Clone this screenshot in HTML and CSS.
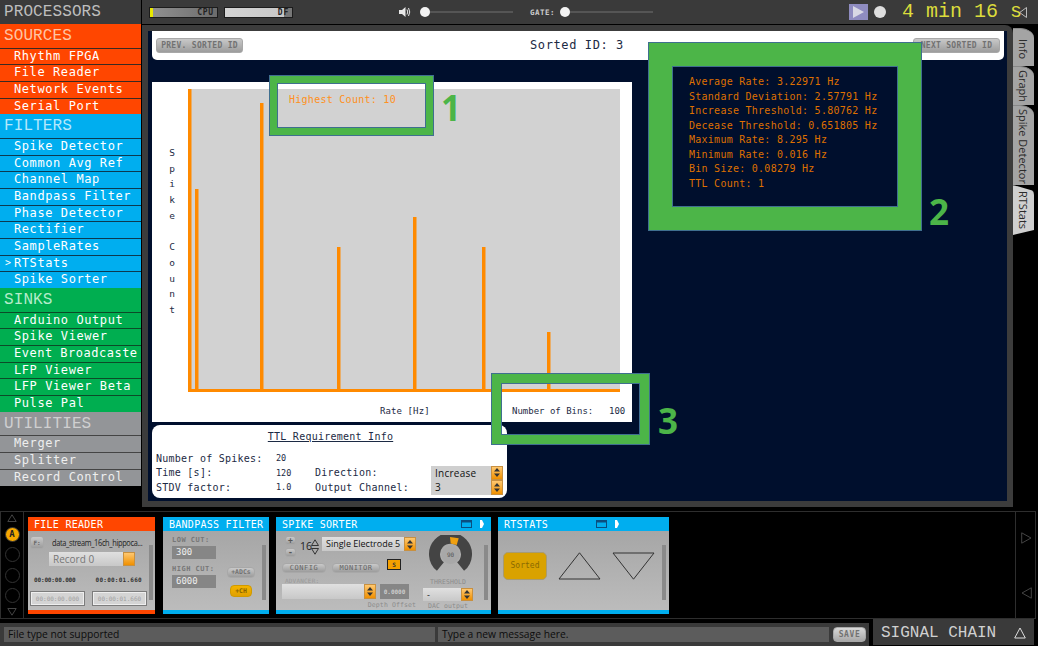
FILE: index.html
```html
<!DOCTYPE html>
<html lang="en">
<head>
<meta charset="utf-8">
<title>Open Ephys RTStats</title>
<link rel="stylesheet" href="styles.css">
</head>
<body>
<div class="app">
  <aside class="sidebar">
    <div class="side-title">PROCESSORS</div>
    <section class="group sources">
      <h2>SOURCES</h2>
      <div class="item">Rhythm FPGA</div><div class="item">File Reader</div><div class="item">Network Events</div><div class="item">Serial Port</div>
    </section>
    <section class="group filters">
      <h2>FILTERS</h2>
      <div class="item">Spike Detector</div><div class="item">Common Avg Ref</div><div class="item">Channel Map</div><div class="item">Bandpass Filter</div><div class="item">Phase Detector</div><div class="item">Rectifier</div><div class="item">SampleRates</div><div class="item selected">RTStats</div><div class="item">Spike Sorter</div>
    </section>
    <section class="group sinks">
      <h2>SINKS</h2>
      <div class="item">Arduino Output</div><div class="item">Spike Viewer</div><div class="item event">Event Broadcaste</div><div class="item">LFP Viewer</div><div class="item">LFP Viewer Beta</div><div class="item">Pulse Pal</div>
    </section>
    <section class="group utilities">
      <h2>UTILITIES</h2>
      <div class="item">Merger</div><div class="item">Splitter</div><div class="item">Record Control</div>
    </section>
  </aside>

  <header class="topbar">
    <div class="meter cpu"><span>CPU</span></div>
    <div class="meter df"><span>DF</span></div>
    <svg class="speaker" width="12" height="12" viewBox="0 0 12 12"><path d="M0 4h3l3.500-3v10L3 8H0z" fill="#e8e8e8"/><path d="M8 3.500q1.500 2.500 0 5M9.500 2q2.500 4 0 8" fill="none" stroke="#e8e8e8" stroke-width="1"/></svg>
    <div class="slider first"><i class="knob"></i><i class="track"></i></div>
    <span class="gate">GATE:</span>
    <div class="slider"><i class="knob"></i><i class="track"></i></div>
    <div class="play"><svg width="11" height="12" viewBox="0 0 11 12"><path d="M0 0l11 6-11 6z" fill="#d8d8e4"/></svg></div>
    <i class="rec"></i>
    <span class="timer">4 min 16 s</span>
    <svg class="collapse" width="8" height="11" viewBox="0 0 8 11"><path d="M7.500 .5v10L.7 5.500z" fill="none" stroke="#bbb"/></svg>
  </header>

  <main class="workspace">
    <div class="frame">
      <div class="navy">
        <div class="id-panel">
          <button class="btn wide">PREV. SORTED ID</button>
          <span class="sorted-id">Sorted ID: 3</span>
          <button class="btn wide">NEXT SORTED ID</button>
        </div>
        <div class="chart">
          <div class="chart-main">
            <div class="ylabel"><span>S</span><span>p</span><span>i</span><span>k</span><span>e</span><span>&nbsp;</span><span>C</span><span>o</span><span>u</span><span>n</span><span>t</span></div>
            <svg class="plot" width="434" height="303" viewBox="0 0 434 303">
              <rect x="2" width="432" height="301" fill="#d2d2d2"/>
              <g fill="#ff8a00">
                <rect x="2" y="0" width="3.500" height="303"/>
                <rect x="2" y="300" width="432" height="3"/>
                <rect x="9" y="100" width="3.500" height="200"/>
                <rect x="74" y="14" width="3.500" height="286"/>
                <rect x="151" y="158" width="3.500" height="142"/>
                <rect x="227" y="128" width="3.500" height="172"/>
                <rect x="296" y="158" width="3.500" height="142"/>
                <rect x="361" y="243" width="3.500" height="57"/>
              </g>
            </svg>
          </div>
          <div class="chart-foot">
            <span class="rate">Rate [Hz]</span>
            <span class="bins">Number of Bins:</span>
            <span class="bins-val">100</span>
          </div>
        </div>
        <div class="ttl">
          <div class="ttl-title">TTL Requirement Info</div>
          <div class="ttl-grid">
            <span>Number of Spikes:</span><span class="val">20</span><span></span><span></span>
            <span>Time [s]:</span><span class="val">120</span><span>Direction:</span><div class="combo ttl-combo"><em>Increase</em><b class="spin"><svg width="6" height="9" viewBox="0 0 6 9"><path d="M3 0l3 3.500H0zM3 9l3-3.500H0z" fill="#333"/></svg></b></div>
            <span>STDV factor:</span><span class="val">1.0</span><span>Output Channel:</span><div class="combo ttl-combo"><em>3</em><b class="spin"><svg width="6" height="9" viewBox="0 0 6 9"><path d="M3 0l3 3.500H0zM3 9l3-3.500H0z" fill="#333"/></svg></b></div>
          </div>
        </div>
      </div>
    </div>
    <nav class="tabs">
      <div class="tab t-info">Info</div>
      <div class="tab t-graph">Graph</div>
      <div class="tab t-spike">Spike Detector</div>
      <div class="tab t-rt">RTStats</div>
    </nav>
  </main>

  <section class="chain">
    <div class="chain-left">
      <svg width="10" height="8" viewBox="0 0 10 8"><path d="M5 .8L9.200 7.500H.8z" fill="none" stroke="#444"/></svg>
      <i class="slot active">A</i><i class="slot"></i><i class="slot"></i><i class="slot"></i>
      <svg width="10" height="8" viewBox="0 0 10 8"><path d="M5 7.200L9.200 .5H.8z" fill="none" stroke="#444"/></svg>
    </div>
    <div class="chain-view">
      <article class="card c-orange w-file">
        <div class="card-head">FILE READER</div>
        <div class="card-body">
          <div class="file-col">
            <div class="file-top"><button class="btn f-btn">F:</button><span class="filename">data_stream_16ch_hippoca...</span></div>
            <div class="combo rec-combo"><em>Record 0</em><b class="spin"></b></div>
            <div class="times"><span>00:00:00.000</span><span>00:00:01.660</span></div>
            <div class="time-boxes"><span>00:00:00.000</span><span>00:00:01.660</span></div>
          </div>
          <i class="scroll"></i>
        </div>
      </article>

      <article class="card c-blue w-band">
        <div class="card-head">BANDPASS FILTER</div>
        <div class="card-body">
          <div class="band-col">
            <label>LOW CUT:</label><div class="num">300</div>
            <label class="gap-label">HIGH CUT:</label><div class="num">6000</div>
          </div>
          <div class="band-btns"><button class="btn adc">+ADCs</button><button class="btn ch">+CH</button></div>
          <i class="scroll"></i>
        </div>
      </article>

      <article class="card c-blue w-sorter">
        <div class="card-head">SPIKE SORTER
          <span class="head-icons"><svg width="11" height="8" viewBox="0 0 11 8"><rect x=".5" y=".5" width="10" height="7" fill="none" stroke="#0a4f80"/><rect x=".5" y=".5" width="10" height="2" fill="#0a4f80"/></svg><svg width="4" height="8" viewBox="0 0 4 8"><path d="M0 0h2l2 4-2 4H0z" fill="#fff"/></svg></span>
        </div>
        <div class="card-body">
          <div class="sorter-left">
            <div class="s-row1">
              <div class="pm"><button class="btn">+</button><button class="btn">-</button></div>
              <span class="chan">16</span>
              <svg class="updown" width="8" height="16" viewBox="0 0 8 16"><path d="M4 .8L7.500 6.500H.5zM4 15.200L7.500 9.500H.5z" fill="none" stroke="#333"/></svg>
              <div class="combo el-combo"><em>Single Electrode 5</em><b class="spin"><svg width="6" height="9" viewBox="0 0 6 9"><path d="M3 0l3 3.500H0zM3 9l3-3.500H0z" fill="#333"/></svg></b></div>
            </div>
            <div class="s-row2">
              <button class="btn cfg">CONFIG</button><button class="btn mon">MONITOR</button><span class="s-box">S</span>
            </div>
            <div class="adv">ADVANCER:</div>
            <div class="s-row4">
              <div class="combo adv-combo"><em></em><b class="spin"><svg width="6" height="9" viewBox="0 0 6 9"><path d="M3 0l3 3.500H0zM3 9l3-3.500H0z" fill="#333"/></svg></b></div>
              <span class="depth">0.0000</span>
            </div>
            <div class="caption right">Depth Offset</div>
          </div>
          <div class="sorter-right">
            <div class="knob-wrap">
              <svg width="43" height="37" viewBox="0 0 43 37">
                <path d="M11.400 31.600A16 16 0 1 1 31.600 31.600" fill="none" stroke="#444" stroke-width="11"/>
                <circle cx="21.500" cy="20" r="9" fill="#a8a8a8"/>
                <path d="M21 2L29.700 3.300 27.700 10 21.700 8.600z" fill="#f0a010"/>
              </svg>
              <span class="knob-val">90</span>
            </div>
            <div class="caption center">THRESHOLD</div>
            <div class="combo dac-combo"><em>-</em><b class="spin"><svg width="6" height="9" viewBox="0 0 6 9"><path d="M3 0l3 3.500H0zM3 9l3-3.500H0z" fill="#333"/></svg></b></div>
            <div class="caption center">DAC output</div>
          </div>
          <i class="scroll"></i>
        </div>
      </article>

      <article class="card c-blue w-rt">
        <div class="card-head">RTSTATS
          <span class="head-icons"><svg width="11" height="8" viewBox="0 0 11 8"><rect x=".5" y=".5" width="10" height="7" fill="none" stroke="#0a4f80"/><rect x=".5" y=".5" width="10" height="2" fill="#0a4f80"/></svg><svg width="4" height="8" viewBox="0 0 4 8"><path d="M0 0h2l2 4-2 4H0z" fill="#fff"/></svg></span>
        </div>
        <div class="card-body">
          <button class="btn sorted">Sorted</button>
          <svg class="tri" width="43" height="28" viewBox="0 0 43 28"><path d="M21.500 .8L42 27H1z" fill="none" stroke="#333"/></svg>
          <svg class="tri" width="43" height="28" viewBox="0 0 43 28"><path d="M21.500 27.200L42 1H1z" fill="none" stroke="#333"/></svg>
          <i class="scroll"></i>
        </div>
      </article>
    </div>
    <div class="chain-right">
      <svg width="11" height="12" viewBox="0 0 11 12"><path d="M.7 .8L10 6 .7 11.200z" fill="none" stroke="#444"/></svg>
      <svg width="11" height="12" viewBox="0 0 11 12"><path d="M10.300 .8L1 6l9.300 5.200z" fill="none" stroke="#444"/></svg>
    </div>
  </section>

  <footer class="footer">
    <div class="status">
      <div class="field f-status">File type not supported</div>
      <div class="field f-msg">Type a new message here.</div>
      <button class="btn save">SAVE</button>
    </div>
    <div class="signal"><span>SIGNAL CHAIN</span><svg width="12" height="12" viewBox="0 0 12 12"><path d="M6 1l5.300 10H.7z" fill="none" stroke="#ddd"/></svg></div>
  </footer>

  <div class="callout co1"><span class="co-text">Highest Count: 10</span><b class="co-num">1</b></div>
  <div class="callout co2">
    <ul class="stats">
      <li>Average Rate: 3.22971 Hz</li>
      <li>Standard Deviation: 2.57791 Hz</li>
      <li>Increase Threshold: 5.80762 Hz</li>
      <li>Decease Threshold: 0.651805 Hz</li>
      <li>Maximum Rate: 8.295 Hz</li>
      <li>Minimum Rate: 0.016 Hz</li>
      <li>Bin Size: 0.08279 Hz</li>
      <li>TTL Count: 1</li>
    </ul>
    <b class="co-num">2</b>
  </div>
  <div class="callout co3"><b class="co-num">3</b></div>
</div>
</body>
</html>
```

FILE: styles.css
```css
* { box-sizing: border-box; }
html, body { margin: 0; height: 100%; }
body { background: #000; overflow: hidden; font-family: "DejaVu Sans Mono", monospace; }
i, em, b { font-style: normal; }
button { font-family: inherit; padding: 0; margin: 0; }

.app {
  position: relative;
  width: 1038px;
  height: 646px;
  display: grid;
  grid-template-columns: 142px 1fr;
  grid-template-rows: 25px 486px 108px 27px;
}

/* Sidebar */
.sidebar { grid-column: 1; grid-row: 1 / 3; }
.side-title {
  height: 24px;
  background: #3a3a3a;
  color: #bdbdbd;
  font: 16px/25px "Liberation Mono", monospace;
  letter-spacing: .1px;
  padding-left: 4px;
  width: 141px;
}
.group { width: 141px; color: #fff; }
.group h2 {
  margin: 0;
  height: 23.6px;
  font: 400 16px/25px "Liberation Mono", monospace;
  letter-spacing: .1px;
  padding-left: 4px;
}
.item {
  height: 16.7px;
  border-top: 1.5px solid #3a2a22;
  font-size: 12px;
  line-height: 14px;
  letter-spacing: .58px;
  padding-left: 14px;
  white-space: nowrap;
}
.event { letter-spacing: .5px; }
.sources { background: #ff4600; }
.sources h2 { color: #ffc4a4; }
.filters { background: #00aeef; }
.filters h2 { color: #b4e8fc; }
.filters .item { border-top-color: #0c3a50; }
.sinks { background: #00ae50; }
.sinks h2 { color: #b4ecca; }
.sinks .item { border-top-color: #0c4a28; }
.utilities { background: #939598; }
.utilities h2 { color: #cfcfd0; }
.utilities .item { border-top-color: #444; color: #eee; }
.selected { position: relative; }
.selected::before { content: ">"; position: absolute; left: 5px; top: -1px; font-size: 10px; line-height: 16px; }

/* Top bar */
.topbar {
  grid-column: 2;
  grid-row: 1;
  height: 24px;
  background: #3a3a3a;
  display: flex;
  align-items: center;
  padding-left: 7px;
  color: #ddd;
}
.meter {
  width: 69px;
  height: 11px;
  border: 1px solid #1c1c1c;
  display: flex;
  justify-content: flex-end;
  align-items: center;
  padding-right: 3px;
  font-size: 8px;
  font-weight: 700;
  letter-spacing: .8px;
  color: #222;
}
.cpu { background: linear-gradient(90deg, #e8e800 0 3px, #909090 3px, #6c6c6c); }
.df { margin-left: 6px; background: linear-gradient(90deg, #d4d4d4 0, #c8c8c8 88%, #777 88%); }
.speaker { margin-left: 106px; }
.slider { width: 93px; height: 10px; display: flex; align-items: center; }
.slider.first { margin-left: 9px; }
.knob { width: 10px; height: 10px; border-radius: 50%; background: #f2f2f2; flex: none; }
.track { flex: 1; height: 2px; background: #555; }
.gate { margin-left: 17px; width: 30px; font-size: 7.500px; font-weight: 700; letter-spacing: .5px; color: #ccc; }
.play {
  margin-left: 196px;
  width: 19px;
  height: 16px;
  background: #8f8cc0;
  display: flex;
  align-items: center;
  justify-content: center;
}
.rec { margin-left: 6px; width: 12px; height: 12px; border-radius: 50%; background: #dedede; }
.timer {
  margin-left: 16px;
  width: 120px;
  color: #dcdc3c;
  font: 20px/24px "Liberation Mono", monospace;
  white-space: nowrap;
}
.collapse { margin-left: -3px; }

/* Main */
.workspace { grid-column: 2; grid-row: 2; display: flex; align-items: flex-start; }
.frame {
  width: 871px;
  height: 482px;
  background: #3c3c3c;
  padding: 6px;
  border-radius: 0 8px 0 0;
}
.navy { height: 470px; background: #000f2d; padding-left: 4px; }
.id-panel {
  width: 852px;
  height: 29px;
  background: #fff;
  border-radius: 0 0 5px 5px;
  display: flex;
  align-items: flex-start;
  justify-content: space-between;
  padding: 7px 4px 0;
  color: #1c2a44;
}
.sorted-id { font-size: 12px; line-height: 14px; letter-spacing: .6px; margin-left: -2px; }
.btn {
  background: linear-gradient(#c9c9c9, #9c9c9c);
  border: 1px solid #a8a8a8;
  border-radius: 3px;
  color: #727272;
  font-size: 8px;
  font-weight: 700;
  line-height: 1;
}
.wide { width: 87px; height: 15px; letter-spacing: .3px; white-space: nowrap; }

.chart { width: 480px; height: 340px; margin-top: 22px; background: #fff; padding-top: 7px; color: #1c2a44; }
.chart-main { display: flex; height: 303px; }
.ylabel {
  width: 34px;
  padding: 56px 0 0 15px;
  display: flex;
  flex-direction: column;
  font-size: 9.500px;
  line-height: 15.7px;
}
.ylabel span { height: 15.700px; width: 10px; text-align: center; }
.chart-foot { display: flex; font-size: 9px; line-height: 12px; padding: 13px 0 0 228px; white-space: nowrap; }
.rate { width: 132px; letter-spacing: .1px; }
.bins { width: 97px; }

.ttl {
  width: 355px;
  height: 73px;
  margin-top: 3px;
  background: #fff;
  border-radius: 8px;
  padding: 5px 4px 0;
  color: #1c2a44;
  font-size: 10px;
  letter-spacing: .25px;
}
.ttl-title { text-align: center; text-decoration: underline; line-height: 13px; margin-left: 2px; }
.ttl-grid {
  display: grid;
  grid-template-columns: 120px 39px 116px 72px;
  grid-auto-rows: 14.500px;
  margin-top: 8px;
  align-items: center;
}
.val { font-size: 8.500px; letter-spacing: 0; }
.combo { display: flex; background: linear-gradient(#e0e0e0, #c8c8c8); align-items: stretch; color: #222; }
.combo em { flex: 1; font-family: "Open Sans", sans-serif; white-space: nowrap; overflow: hidden; padding-left: 4px; }
.spin {
  width: 12px;
  flex: none;
  background: linear-gradient(#ffc870, #f09000);
  display: flex;
  align-items: center;
  justify-content: center;
  border: 1px solid #c89040;
}
.ttl-combo { height: 14.500px; font-size: 10px; line-height: 14px; background: #cfcfcf; color: #111; }
.ttl-combo .spin { width: 12px; }

/* Signal chain */
.chain {
  grid-column: 1 / 3;
  grid-row: 3;
  display: grid;
  grid-template-columns: 23px 991px 22px;
  width: 1036px;
  border: 1px solid #2e2e2e;
  border-bottom-width: 1px;
}
.chain-left {
  border-right: 1px solid #2e2e2e;
  display: flex;
  flex-direction: column;
  align-items: center;
  justify-content: space-between;
  padding: 2px 0 2px;
}
.slot { width: 15px; height: 15px; border-radius: 50%; border: 1px solid #333; }
.slot.active {
  background: #f5a800;
  color: #222;
  font: 700 9px/13px "DejaVu Sans Mono", monospace;
  text-align: center;
}
.chain-view { display: flex; gap: 7px; padding: 5px 0 0 4px; }
.chain-right {
  border-left: 1px solid #2e2e2e;
  display: flex;
  flex-direction: column;
  align-items: center;
  gap: 43px;
  padding-top: 20px;
}
.card { height: 97px; display: flex; flex-direction: column; background: linear-gradient(#a2a2a2, #bcbcbc); border-bottom: 4px solid; }
.w-file { width: 127px; margin-right: 1px; }
.w-band { width: 106px; }
.w-sorter { width: 215px; }
.w-rt { width: 171px; }
.w-rt .head-icons { padding-right: 50px; }
.c-orange { border-color: #ff4600; }
.c-blue { border-color: #00aeef; }
.card-head {
  height: 14px;
  flex: none;
  color: #fff;
  font-size: 10px;
  line-height: 15px;
  letter-spacing: .27px;
  padding-left: 6px;
  display: flex;
  justify-content: space-between;
}
.c-orange .card-head { background: #ff4600; }
.c-blue .card-head { background: #00aeef; }
.head-icons { display: flex; align-items: center; gap: 8px; padding-right: 7px; }
.card-body { flex: 1; display: flex; min-height: 0; }
.scroll { width: 4px; height: 55px; margin: 14px 3px 0 auto; background: #8a8a8a; flex: none; }

.file-col { width: 119px; padding: 5px 0 0 2px; }
.w-file .scroll { margin-right: 2px; }
.file-top { display: flex; align-items: center; height: 13px; }
.f-btn { width: 14px; height: 13px; flex: none; font-size: 6px; border-radius: 3px; color: #666; }
.filename {
  margin-left: 8px;
  width: 114px;
  flex: none;
  font: 9px/13px "Open Sans", sans-serif;
  letter-spacing: -.4px;
  color: #222;
  white-space: nowrap;
  transform: scaleX(.82);
  transform-origin: left center;
}
.rec-combo { width: 86px; height: 14px; margin: 3px 0 0 19px; font-size: 10px; line-height: 14px; color: #777; }
.times { display: flex; gap: 20px; height: 8px; margin: 10px 0 0 4px; font-size: 6px; line-height: 8px; font-weight: 700; color: #333; letter-spacing: -.15px; }
.times span + span { letter-spacing: .25px; }
.time-boxes { display: flex; gap: 7px; margin-top: 7px; }
.time-boxes span {
  width: 55px;
  height: 15px;
  background: #d4d4d4;
  border: 1px solid #7c7c7c;
  box-shadow: inset 0 0 0 1px #eee;
  font-size: 6px;
  line-height: 13px;
  text-align: center;
  color: #a0a0a0;
}

.band-col { width: 55px; margin-left: 9px; padding-top: 5px; }
.band-col label { display: block; font-size: 7px; font-weight: 700; letter-spacing: .5px; line-height: 8px; color: #777; white-space: nowrap; }
.band-col .gap-label { margin-top: 6px; }
.num { width: 44px; height: 13px; margin-top: 2px; background: #868686; color: #eee; font-size: 9px; line-height: 13px; padding-left: 4px; }
.band-btns { display: flex; flex-direction: column; align-items: center; width: 28px; margin-left: 0; padding-top: 36px; }
.adc { width: 28px; height: 11px; font-size: 6.500px; border-radius: 4px; white-space: nowrap; }
.ch { width: 22px; height: 12px; margin-top: 7px; font-size: 6.500px; background: linear-gradient(#f4b400, #e0a000); border-color: #d09a00; color: #8a6400; border-radius: 4px; }

.sorter-left { width: 134px; margin-left: 6px; padding-top: 5px; }
.s-row1 { display: flex; height: 21px; padding-left: 3px; }
.pm { display: flex; flex-direction: column; justify-content: space-between; width: 11px; }
.pm .btn { width: 11px; height: 9px; border-radius: 3px; font-size: 8px; color: #555; }
.chan { margin-left: 4px; width: 11px; font: 10.500px/20px "Open Sans", sans-serif; color: #222; }
.updown { margin: 3px 0 0 0; flex: none; }
.el-combo { width: 94px; height: 14px; margin: 1px 0 0 3px; font-size: 9px; line-height: 14px; color: #111; }
.s-row2 { display: flex; height: 14px; margin-top: 2px; align-items: flex-end; }
.cfg, .mon { height: 10px; border-radius: 4px; font-size: 7px; letter-spacing: .5px; font-weight: 400; color: #666; }
.cfg { width: 44px; }
.mon { width: 48px; margin-left: 6px; }
.s-box {
  width: 14px;
  height: 11px;
  margin: 0 0 3px 7px;
  background: #f5a000;
  border: 1px solid #222;
  font-size: 6px;
  font-weight: 700;
  line-height: 9px;
  text-align: center;
  color: #333;
  align-self: flex-start;
}
.adv { height: 7px; margin: 4px 0 0 3px; font-size: 6px; line-height: 7px; color: #999; letter-spacing: .2px; }
.s-row4 { display: flex; gap: 4px; height: 15px; }
.adv-combo { width: 94px; }
.depth { width: 29px; background: #868686; color: #ccc; font-size: 6px; font-weight: 700; line-height: 15px; text-align: center; }
.caption { font-size: 6.500px; line-height: 8px; color: #8c8c8c; letter-spacing: .1px; white-space: nowrap; }
.caption.right { text-align: right; margin-top: 2px; }
.caption.center { text-align: center; }
.sorter-right { width: 50px; margin-left: 7px; padding-top: 4px; }
.knob-wrap { position: relative; height: 37px; margin: 0 0 6px 6px; width: 43px; }
.knob-val { position: absolute; left: 0; right: 0; top: 16px; text-align: center; font-size: 6px; line-height: 8px; color: #555; }
.dac-combo { height: 13px; margin: 2px 0 1px; font-size: 9px; line-height: 13px; color: #222; }
.sorter-right .caption:first-of-type { letter-spacing: .3px; }
.w-sorter .scroll { margin-left: 11px; }

.sorted {
  width: 44px;
  height: 28px;
  margin: 21px 0 0 5px;
  background: #d9a200;
  border: 1px solid #a89b70;
  border-radius: 5px;
  font-size: 8px;
  font-weight: 400;
  color: #8a6a00;
}
.tri { margin: 21px 0 0 11px; flex: none; }

/* Footer */
.footer { grid-column: 1 / 3; grid-row: 4; display: flex; align-items: flex-start; }
.status {
  width: 869px;
  height: 23px;
  margin-top: 4px;
  background: #3a3a3a;
  display: flex;
  gap: 3px;
  padding: 4px 0 0 4px;
}
.field { height: 15px; background: #5c5c5c; color: #0c0c0c; font: 10.300px/15px "Open Sans", sans-serif; padding-left: 4px; white-space: nowrap; }
.f-status { width: 431px; }
.f-msg { width: 391px; }
.save { width: 33px; height: 15px; margin-left: 1px; font-size: 8px; letter-spacing: .6px; background: linear-gradient(#d8d8d8, #a8a8a8); border-radius: 4px; }
.signal {
  width: 161px;
  height: 26px;
  margin-left: 4px;
  background: #3a3a3a;
  color: #d0d0d0;
  display: flex;
  justify-content: space-between;
  align-items: center;
  padding: 2px 8px 0;
  font: 16px/24px "Liberation Mono", monospace;
}

/* Callouts over the content */
.callout {
  position: absolute;
  border: solid #4cb548;
  box-shadow: 0 0 0 1px #3f6f8f, inset 0 0 0 1px #3f6f8f;
}
.co-num {
  position: absolute;
  font: 700 35px/1 "Open Sans", sans-serif;
  color: #4cb548;
}
.co1 { left: 270px; top: 76px; width: 163px; height: 59px; border-width: 7px; padding: 10px 0 0 12px; }
.co1 .co-num { left: 164px; top: 7px; }
.co-text { display: block; font-size: 10px; letter-spacing: .27px; line-height: 14px; color: #ff9020; white-space: nowrap; }
.co2 { left: 649px; top: 43px; width: 272px; height: 187px; border-width: 23px; background: #000f2d; }
.co2 .co-num { left: 257px; top: 128px; }
.stats {
  margin: 0;
  padding: 9px 0 0 17px;
  list-style: none;
  font-size: 10px;
  letter-spacing: .26px;
  line-height: 14.500px;
  color: #df7000;
  white-space: nowrap;
}
.co3 { left: 492px; top: 374px; width: 157px; height: 70px; border-width: 9px; }
.co3 .co-num { left: 157px; top: 20px; }

/* Side tabs */
.tabs { width: 21px; padding-top: 3px; display: flex; flex-direction: column; }
.tab {
  width: 21px;
  writing-mode: vertical-rl;
  font: 11px/21px "Open Sans", sans-serif;
  background: #a4a4a4;
  color: #2a2a2a;
  border-radius: 0 14px 0 0 / 0 10px 0 0;
  border-top: 1px solid #888;
  padding-top: 3px;
  white-space: nowrap;
}
.t-info { height: 38px; padding-top: 10px; }
.t-graph { height: 39px; }
.t-spike { height: 80px; padding-top: 3px; }
.t-rt { height: 50px; background: #cfcfcf; clip-path: polygon(0 0, 100% 12%, 100% 90%, 0 100%); padding-top: 5px; }
```
